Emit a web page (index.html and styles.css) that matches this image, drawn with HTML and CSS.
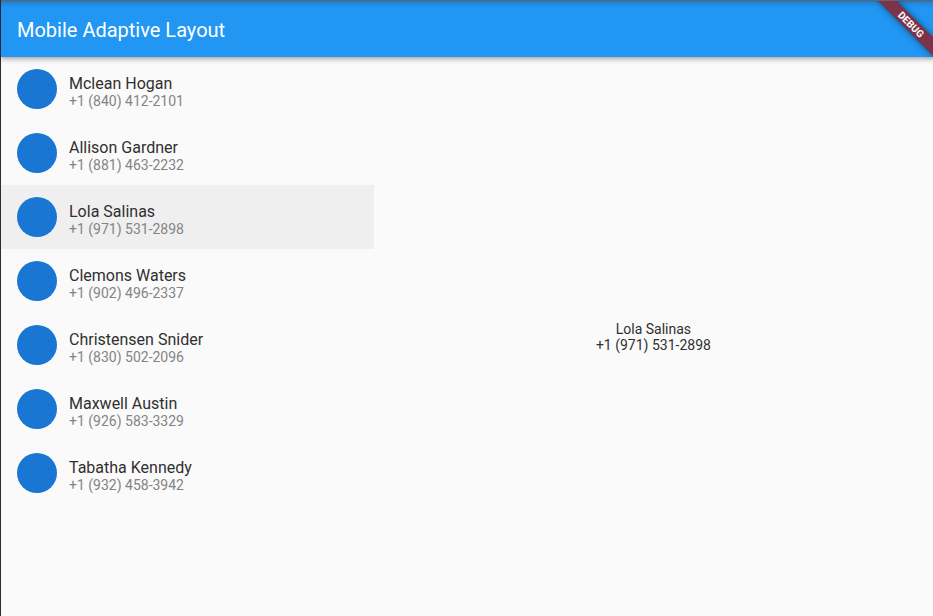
FILE: index.html
```html
<!DOCTYPE html>
<html lang="en">
<head>
<meta charset="utf-8">
<meta name="viewport" content="width=device-width, initial-scale=1">
<title>Mobile Adaptive Layout</title>
<link rel="stylesheet" href="styles.css">
</head>
<body>
<div class="app">
  <header class="app-bar">
    <h1 class="app-title">Mobile Adaptive Layout</h1>
  </header>
  <main class="panes">
    <ul class="contacts">
      <li><button class="contact" type="button"><span class="avatar"></span><span class="details"><span class="name">Mclean Hogan</span><span class="phone">+1 (840) 412-2101</span></span></button></li>
      <li><button class="contact" type="button"><span class="avatar"></span><span class="details"><span class="name">Allison Gardner</span><span class="phone">+1 (881) 463-2232</span></span></button></li>
      <li><button class="contact selected" type="button" aria-current="true"><span class="avatar"></span><span class="details"><span class="name">Lola Salinas</span><span class="phone">+1 (971) 531-2898</span></span></button></li>
      <li><button class="contact" type="button"><span class="avatar"></span><span class="details"><span class="name">Clemons Waters</span><span class="phone">+1 (902) 496-2337</span></span></button></li>
      <li><button class="contact" type="button"><span class="avatar"></span><span class="details"><span class="name">Christensen Snider</span><span class="phone">+1 (830) 502-2096</span></span></button></li>
      <li><button class="contact" type="button"><span class="avatar"></span><span class="details"><span class="name">Maxwell Austin</span><span class="phone">+1 (926) 583-3329</span></span></button></li>
      <li><button class="contact" type="button"><span class="avatar"></span><span class="details"><span class="name">Tabatha Kennedy</span><span class="phone">+1 (932) 458-3942</span></span></button></li>
    </ul>
    <section class="contact-view">
      <p>Lola Salinas</p>
      <p>+1 (971) 531-2898</p>
    </section>
  </main>
  <div class="banner-corner"><div class="banner">DEBUG</div></div>
</div>
</body>
</html>
```
FILE: styles.css
```css
* {
  box-sizing: border-box;
}

body {
  margin: 0;
  background: #fafafa;
  color: #303030;
  font-family: Roboto, "Liberation Sans", sans-serif;
}

.app {
  position: relative;
  display: flex;
  flex-direction: column;
  min-height: 100vh;
  border-left: 1px solid #2d2b38;
}

.app-bar {
  position: relative;
  display: flex;
  align-items: center;
  height: 57px;
  padding: 2px 16px 0;
  border-top: 1px solid #63656a;
  background: linear-gradient(#1b76bd, #2089de 2px, #2196f3 7px);
  box-shadow: 0 2px 5px rgba(0, 0, 0, 0.35);
}

.app-title {
  margin: 0;
  color: #fff;
  font-size: 20px;
  font-weight: 400;
  line-height: 24px;
}

.panes {
  display: grid;
  grid-template-columns: 2fr 3fr;
  flex: 1;
}

.contacts {
  margin: 0;
  padding: 0;
  list-style: none;
}

.contact {
  display: flex;
  align-items: center;
  gap: 12px;
  width: 100%;
  height: 64px;
  padding: 0 16px;
  border: 0;
  background: transparent;
  color: inherit;
  font: inherit;
  text-align: left;
}

.contact.selected {
  background: #efefef;
}

.avatar {
  flex: none;
  width: 40px;
  height: 40px;
  border-radius: 50%;
  background: #1976d2;
}

.details {
  display: flex;
  flex-direction: column;
  padding-top: 6px;
}

.name {
  font-size: 16px;
  line-height: 18px;
}

.phone {
  color: #848484;
  font-size: 14px;
  line-height: 16px;
}

.contact-view {
  display: flex;
  flex-direction: column;
  align-items: center;
  justify-content: center;
  font-size: 14px;
  line-height: 16px;
}

.contact-view p {
  margin: 0;
}

.banner-corner {
  position: absolute;
  top: 1px;
  right: 0;
  width: 72px;
  height: 72px;
  overflow: hidden;
  pointer-events: none;
}

.banner {
  position: absolute;
  top: 17px;
  right: -18px;
  width: 80px;
  height: 13px;
  background: #7c3349;
  box-shadow: 0 0 6px rgba(0, 0, 0, 0.5);
  color: #fff;
  font-size: 10px;
  font-weight: 700;
  line-height: 13px;
  text-align: center;
  transform: rotate(45deg);
}
```
